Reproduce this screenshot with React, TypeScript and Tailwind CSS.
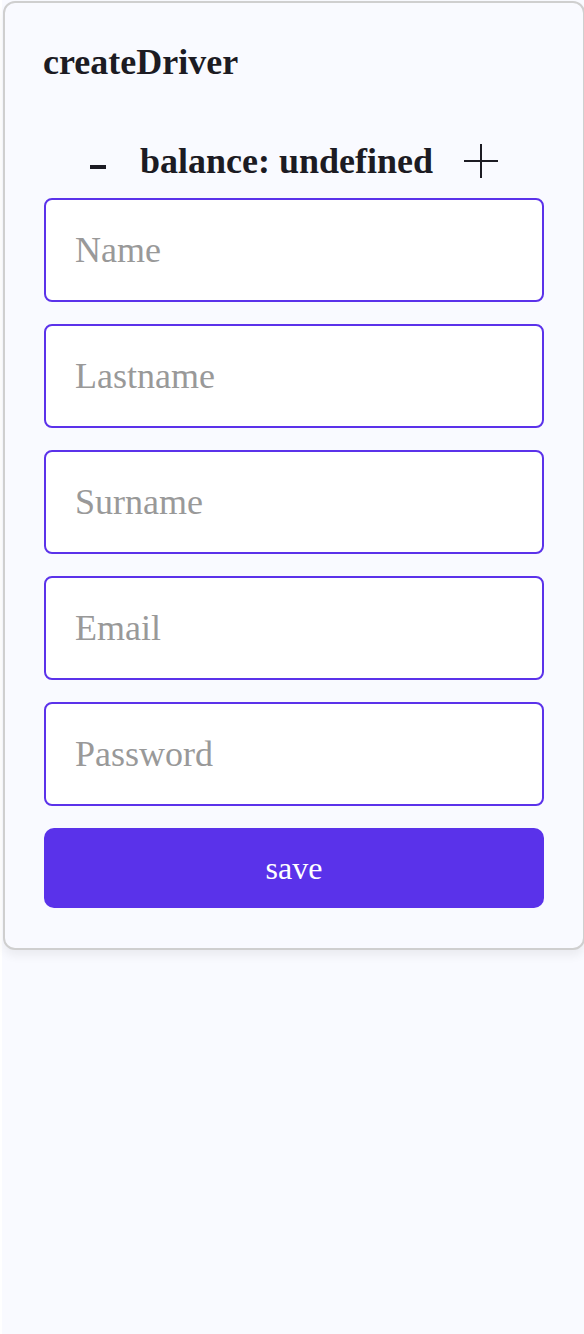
import React, { useState } from 'react';

const fields = ['Name', 'Lastname', 'Surname', 'Email', 'Password'];

const App = () => {
  const [balance, setBalance] = useState<number | undefined>(undefined);
  return <div className="min-h-screen bg-white" style={{ fontFamily: '"Liberation Serif", "Times New Roman", serif' }}>
      <div className="ml-[2px] min-h-screen bg-[#f9faff] pt-[1px]">
        <div className="ml-[1px] w-[582px] rounded-[12px] border-2 border-[#cfcfcf] bg-[#f9faff] px-[39px] pt-[39px] pb-[40px] shadow-[0_6px_10px_rgba(0,0,0,0.06)]">
          <h1 className="-ml-px text-[36px] font-bold leading-[40px] text-[#1c1b23]">createDriver</h1>

          <div className="mt-[59px] flex h-[40px] items-center justify-center">
            <button onClick={() => setBalance((balance ?? 0) - 1)} className="mt-[11px] mr-[34px] h-[4px] w-[16px] bg-[#1c1b23]" aria-label="minus" />
            <span className="text-[36px] font-bold leading-[40px] text-[#1c1b23]">balance: {String(balance)}</span>
            <button onClick={() => setBalance((balance ?? 0) + 1)} className="ml-[31px] text-[#1c1b23]" aria-label="plus">
              <svg width="34" height="34" viewBox="0 0 34 34" fill="none">
                <path d="M17 0V34M0 17H34" stroke="currentColor" strokeWidth="2" />
              </svg>
            </button>
          </div>

          <div className="mt-[17px] flex flex-col gap-[22px]">
            {fields.map(f => <input key={f} placeholder={f} className="h-[104px] w-full rounded-[8px] border-2 border-[#5b32ea] bg-white px-[29px] text-[36px] text-[#333] outline-none placeholder:text-[#999]" />)}
          </div>

          <button className="mt-[22px] h-[80px] w-full rounded-[10px] bg-[#5a32ea] text-[32px] text-white">save</button>
        </div>
      </div>
    </div>;
};

export default App;
